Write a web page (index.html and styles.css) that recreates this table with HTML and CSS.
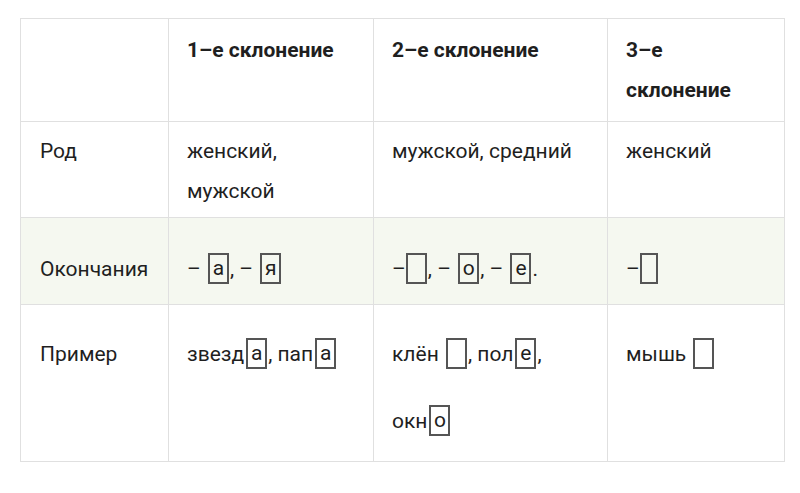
FILE: index.html
```html
<!DOCTYPE html>
<html lang="ru">
<head>
<meta charset="utf-8">
<link rel="stylesheet" href="styles.css">
</head>
<body>
<table class="decl">
  <colgroup>
    <col class="c1"><col class="c2"><col class="c3"><col class="c4">
  </colgroup>
  <tr class="row-head">
    <th></th>
    <th>1–е склонение</th>
    <th>2–е склонение</th>
    <th>3–е склонение</th>
  </tr>
  <tr class="row-gender">
    <td>Род</td>
    <td>женский, мужской</td>
    <td>мужской, средний</td>
    <td>женский</td>
  </tr>
  <tr class="row-end">
    <td>Окончания</td>
    <td><span class="dash">–</span> <span class="box">а</span>, <span class="dash">–</span> <span class="box">я</span></td>
    <td><span class="dash">–</span><span class="box tight"></span>, <span class="dash">–</span> <span class="box">о</span>, <span class="dash">–</span> <span class="box">е</span>.</td>
    <td><span class="dash">–</span><span class="box tight narrow"></span></td>
  </tr>
  <tr class="row-ex">
    <td>Пример</td>
    <td><span class="word">звезд<span class="box">а</span></span>, <span class="word">пап<span class="box">а</span></span></td>
    <td><span class="word">клён <span class="box"></span></span>, <span class="word">пол<span class="box">е</span></span>, <span class="word">окн<span class="box">о</span></span></td>
    <td><span class="word">мышь <span class="box"></span></span></td>
  </tr>
</table>
</body>
</html>
```

FILE: styles.css
```css
html, body {
  margin: 0;
  padding: 0;
  background: #ffffff;
}
body {
  padding: 18px 0 0 20px;
  font-family: Roboto, "Noto Sans", sans-serif;
  color: #1f1f1f;
}
.decl {
  border-collapse: collapse;
  table-layout: fixed;
  width: 764px;
}
.c1 { width: 148px; }
.c2 { width: 205px; }
.c3 { width: 234px; }
.c4 { width: 177px; }
.decl th,
.decl td {
  border: 1.5px solid #e0e0e0;
  text-align: left;
  vertical-align: top;
  padding: 0 26px 0 18px;
  font-size: 21px;
  line-height: 40px;
}
.decl th:first-child,
.decl td:first-child {
  padding-left: 19px;
}
.decl th {
  font-weight: 700;
  font-size: 21px;
}
.row-head th {
  height: 103px;
  padding-top: 11px;
  box-sizing: border-box;
}
.row-gender td {
  height: 96px;
  padding-top: 9px;
  box-sizing: border-box;
}
.row-end td {
  height: 87px;
  padding-top: 31px;
  box-sizing: border-box;
  background: #f5f8f0;
}
.row-ex td {
  height: 157px;
  padding-top: 16px;
  line-height: 67px;
  box-sizing: border-box;
}
.word {
  white-space: nowrap;
}
.box {
  display: inline-block;
  box-sizing: border-box;
  width: 21px;
  height: 31px;
  border: 2px solid #555555;
  line-height: 27px;
  text-align: center;
  vertical-align: middle;
  margin: -4px 1px 0 2px;
}
.box.tight {
  margin-left: 0;
}
.box.narrow {
  width: 18px;
}
.dash {
  display: inline-block;
}
```
